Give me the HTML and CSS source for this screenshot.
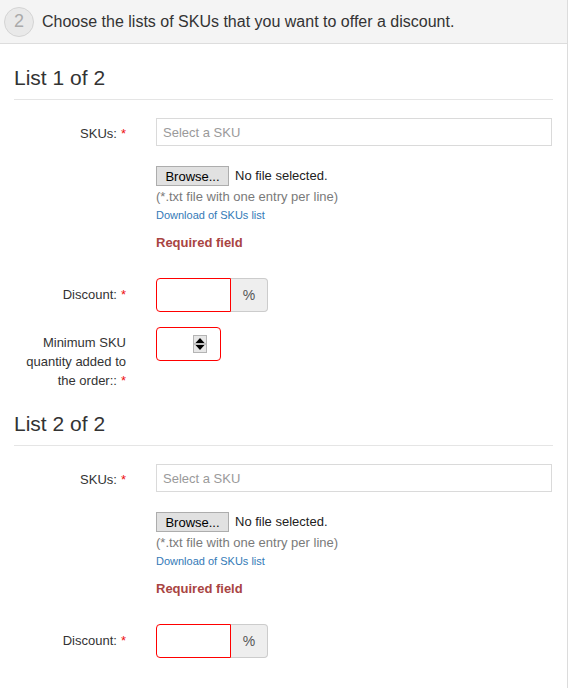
FILE: index.html
```html
<!DOCTYPE html>
<html lang="en">
<head>
<meta charset="utf-8">
<title>Choose the lists of SKUs</title>
<link rel="stylesheet" href="styles.css">
</head>
<body>
<div class="panel">
  <div class="panel-header">
    <span class="step">2</span>
    <span class="step-title">Choose the lists of SKUs that you want to offer a discount.</span>
  </div>
  <div class="panel-body">
    <section class="list">
      <h3 class="list-title">List 1 of 2</h3>
      <div class="row row-sku">
        <label class="label label-sku">SKUs:<span class="req">*</span></label>
        <div class="control">
          <input class="sku-input" type="text" placeholder="Select a SKU">
          <div class="file-line">
            <button class="browse" type="button">Browse...</button>
            <span class="file-name">No file selected.</span>
          </div>
          <div class="help">(*.txt file with one entry per line)</div>
          <a class="download" href="#">Download of SKUs list</a>
          <div class="error">Required field</div>
        </div>
      </div>
      <div class="row row-discount">
        <label class="label label-discount">Discount:<span class="req">*</span></label>
        <div class="control">
          <div class="input-group">
            <input class="pct-input" type="text">
            <span class="addon">%</span>
          </div>
        </div>
      </div>
      <div class="row row-min">
        <label class="label label-min"><span>Minimum SKU quantity added to </span><span>the order::</span><span class="req">*</span></label>
        <div class="control">
          <div class="number-input">
            <input class="number-field" type="text">
            <svg class="spinner" width="14" height="18" viewBox="0 0 14 18">
              <rect x="0.5" y="0.5" width="13" height="17" fill="#e6e6e6" stroke="#b4b4b4"/>
              <line x1="1" y1="9" x2="13" y2="9" stroke="#9a9a9a"/>
              <polygon points="2.5,8 11.5,8 7,3" fill="#000"/>
              <polygon points="2.5,10 11.5,10 7,15" fill="#000"/>
            </svg>
          </div>
        </div>
      </div>
    </section>
    <section class="list">
      <h3 class="list-title">List 2 of 2</h3>
      <div class="row row-sku">
        <label class="label label-sku">SKUs:<span class="req">*</span></label>
        <div class="control">
          <input class="sku-input" type="text" placeholder="Select a SKU">
          <div class="file-line">
            <button class="browse" type="button">Browse...</button>
            <span class="file-name">No file selected.</span>
          </div>
          <div class="help">(*.txt file with one entry per line)</div>
          <a class="download" href="#">Download of SKUs list</a>
          <div class="error">Required field</div>
        </div>
      </div>
      <div class="row row-discount">
        <label class="label label-discount">Discount:<span class="req">*</span></label>
        <div class="control">
          <div class="input-group">
            <input class="pct-input" type="text">
            <span class="addon">%</span>
          </div>
        </div>
      </div>
    </section>
  </div>
</div>
</body>
</html>
```

FILE: styles.css
```css
* { box-sizing: border-box; }

html, body {
  margin: 0;
  padding: 0;
  background: #fff;
}

body {
  font-family: "Liberation Sans", Arial, sans-serif;
  font-size: 13px;
  color: #333;
}

.panel {
  width: 568px;
  min-height: 688px;
  border-right: 1px solid #dcdcdc;
  background: #fff;
}

.panel-header {
  height: 44px;
  display: flex;
  align-items: center;
  padding: 0 4px;
  gap: 8px;
  background: #f4f4f4;
  border-bottom: 1px solid #dddddd;
}

.step {
  width: 30px;
  height: 30px;
  border-radius: 50%;
  border: 1px solid #d4d4d4;
  background: #e9e9e9;
  color: #aaaaaa;
  font-size: 18px;
  display: flex;
  align-items: center;
  justify-content: center;
  flex: none;
}

.step-title {
  font-size: 16px;
  color: #333;
}

.panel-body {
  padding: 0 14px 20px;
}

.list-title {
  margin: 22px 0 0;
  font-size: 21px;
  font-weight: normal;
  line-height: 23px;
  padding-bottom: 10px;
  border-bottom: 1px solid #e5e5e5;
  color: #333;
}

.row {
  display: grid;
  grid-template-columns: 112px 1fr;
  column-gap: 30px;
  align-items: start;
}

.row-sku { margin-top: 18px; }
.row-discount { margin-top: 26px; }
.row-min { margin-top: 15px; }

.label {
  text-align: right;
  line-height: 19px;
  color: #333;
}

.label-sku { padding-top: 6px; }
.label-discount { padding-top: 7px; }
.label-min { padding-top: 6px; }

.req {
  color: #ee1111;
  margin-left: 4px;
}

.control {
  display: flex;
  flex-direction: column;
  align-items: flex-start;
}

.sku-input {
  width: 396px;
  height: 28px;
  border: 1px solid #dadada;
  border-radius: 0;
  padding: 0 6px;
  font-family: inherit;
  font-size: 13px;
  color: #333;
  outline: none;
}

.sku-input::placeholder { color: #9a9a9a; }

.file-line {
  margin-top: 20px;
  height: 21px;
  display: flex;
  align-items: flex-start;
  gap: 6px;
}

.browse {
  width: 73px;
  height: 20px;
  margin: 0;
  padding: 0;
  border: 1px solid #adadad;
  background: #e1e1e1;
  font-family: inherit;
  font-size: 13px;
  color: #000;
}

.file-name {
  color: #222;
  font-size: 13px;
  line-height: 20px;
}

.help {
  line-height: 19px;
  color: #7a7a7a;
}

.download {
  font-size: 11px;
  line-height: 18px;
  color: #337ab7;
  text-decoration: none;
}

.error {
  margin-top: 10px;
  line-height: 18px;
  font-weight: bold;
  color: #a94442;
}

.input-group {
  display: flex;
  height: 34px;
}

.pct-input {
  width: 75px;
  height: 34px;
  border: 1px solid #ff0000;
  border-radius: 4px 0 0 4px;
  padding: 0 8px;
  font-family: inherit;
  font-size: 13px;
  outline: none;
}

.addon {
  width: 37px;
  height: 34px;
  display: flex;
  align-items: center;
  justify-content: center;
  background: #eeeeee;
  border: 1px solid #cccccc;
  border-left: 0;
  border-radius: 0 4px 4px 0;
  font-size: 14px;
  color: #555;
}

.number-input {
  width: 65px;
  height: 34px;
  border: 1px solid #ff0000;
  border-radius: 4px;
  display: flex;
  align-items: center;
  padding: 0 13px 0 4px;
}

.number-field {
  flex: 1;
  min-width: 0;
  height: 26px;
  border: 0;
  padding: 0;
  outline: none;
  font-family: inherit;
  font-size: 13px;
}

.spinner {
  display: block;
  flex: none;
}
```
